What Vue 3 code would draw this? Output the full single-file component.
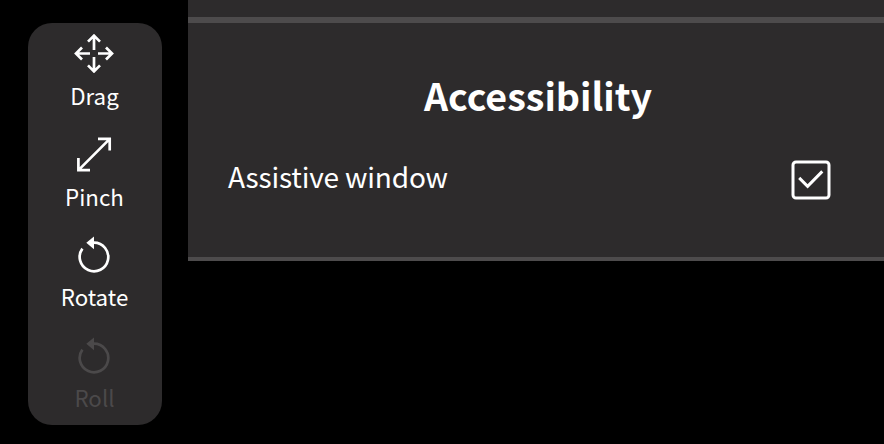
<script setup>
const tools = [
  { label: 'Drag', icon: 'drag' },
  { label: 'Pinch', icon: 'pinch' },
  { label: 'Rotate', icon: 'rotate' },
  { label: 'Roll', icon: 'rotate', disabled: true },
]
</script>

<template>
  <div class="screen">
    <aside class="side">
      <nav class="toolbar">
        <button v-for="tool in tools" :key="tool.label" class="tool" :class="{ disabled: tool.disabled }" :disabled="tool.disabled">
          <svg v-if="tool.icon === 'drag'" class="icon" viewBox="0 0 40 40">
            <path d="M20 17V2.4M14 8.6L20 2.6L26 8.6M20 24V38.6M14 32.4L20 38.4L26 32.4M16 20.5H1.8M8 14.5L2 20.5L8 26.5M24 20.5H38.2M32 14.5L38 20.5L32 26.5" />
          </svg>
          <svg v-else-if="tool.icon === 'pinch'" class="icon" viewBox="0 0 40 40">
            <path d="M4.5 36.1L35.5 5.1M24 4.8H35.7V16.6M4.4 24.1V36.1H16" />
          </svg>
          <svg v-else class="icon" viewBox="0 0 40 40">
            <path d="M8.4 14.6A14.3 14.3 0 1 0 20 8.7" />
            <path class="solid" d="M12.3 8.8L20 2.4V15.2Z" />
          </svg>
          <span class="label">{{ tool.label }}</span>
        </button>
      </nav>
    </aside>
    <main class="settings">
      <div class="previous"></div>
      <section class="group">
        <h2>Accessibility</h2>
        <div class="row">
          <span class="name">Assistive window</span>
          <svg class="checkbox" viewBox="0 0 40 40" role="checkbox" aria-checked="true" aria-label="Assistive window">
            <rect x="2" y="2" width="36" height="36" rx="3" />
            <path d="M8.2 17.9L16.6 26.3L31.3 11.4" />
          </svg>
        </div>
      </section>
    </main>
  </div>
</template>

<style>
body {
  background: #000;
}
</style>

<style scoped>
.screen {
  display: flex;
  height: 444px;
  overflow: hidden;
  background: #000;
  color: #fff;
  font-family: "Noto Sans CJK SC", sans-serif;
}
.side {
  box-sizing: border-box;
  width: 188px;
  flex: none;
  padding: 23px 26px 0 28px;
}
.toolbar {
  box-sizing: border-box;
  height: 402px;
  padding-top: 10px;
  border-radius: 24px;
  background: #2d2b2c;
}
.tool {
  display: flex;
  flex-direction: column;
  align-items: center;
  justify-content: flex-start;
  width: 100%;
  height: 100.5px;
  padding: 0 2px 0 0;
  border: 0;
  background: none;
  color: #fff;
  font: inherit;
}
.tool.disabled {
  color: #4b494a;
}
.icon {
  display: block;
  width: 40px;
  height: 40px;
  fill: none;
  stroke: currentColor;
  stroke-width: 2.7;
}
.icon .solid {
  fill: currentColor;
  stroke: none;
}
.label {
  margin-top: 4px;
  padding-left: 1px;
  font-size: 22.3px;
  line-height: 36px;
}
.settings {
  flex: 1;
}
.previous {
  height: 17px;
  background: #2d2b2c;
}
.group {
  box-sizing: border-box;
  height: 244px;
  border-top: 6px solid #4d4b4c;
  border-bottom: 4px solid #4d4b4c;
  padding: 42px 53px 0 40px;
  background: #2d2b2c;
}
h2 {
  margin: 0;
  padding-left: 17px;
  font-size: 37.6px;
  line-height: 60px;
  font-weight: 700;
  text-align: center;
}
.row {
  display: flex;
  justify-content: space-between;
  align-items: flex-start;
  margin-top: 35px;
  height: 40px;
}
.name {
  font-size: 28px;
  line-height: 33px;
  letter-spacing: -0.17px;
}
.checkbox {
  width: 40px;
  height: 40px;
  fill: none;
  stroke: #fff;
  stroke-width: 3;
}
</style>
